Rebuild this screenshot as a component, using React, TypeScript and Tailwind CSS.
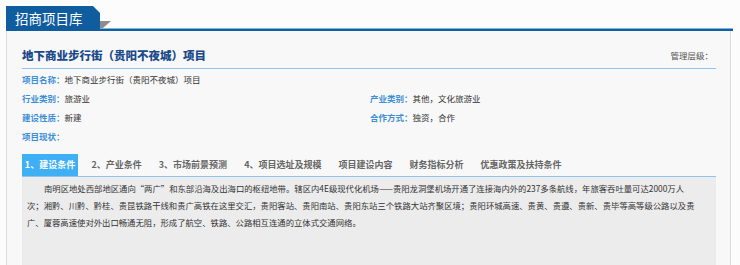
import React from 'react';

const fields: [string, string][][] = [
    [['项目名称：', '地下商业步行街（贵阳不夜城）项目']],
    [['行业类别：', '旅游业'], ['产业类别：', '其他，文化旅游业']],
    [['建设性质：', '新建'], ['合作方式：', '独资，合作']],
    [['项目现状：', '']],
];

const tabs = ['2、产业条件', '3、市场前景预测', '4、项目选址及规模', '项目建设内容', '财务指标分析', '优惠政策及扶持条件'];

export default function App() {
    return (
        <div className="w-[740px] h-[265px] overflow-hidden bg-[#fcfcfc] pl-[6px] pt-[6px] font-['Noto_Sans_CJK_SC',sans-serif]">
            {/* header tab */}
            <div className="flex w-[727px] items-end">
                <div className="h-[25px] w-[94px] bg-[#0f5c9e] pl-[9px] text-[13.5px] leading-[24px] text-white [clip-path:polygon(0_0,calc(100%-7px)_0,100%_7px,100%_100%,0_100%)]">
                    招商项目库
                </div>
                <div className="flex flex-1 flex-col">
                    <svg width="11" height="7" viewBox="0 0 11 7" className="block">
                        <polygon points="0,0 11,0 3,7 0,7" fill="#8d8d8d" />
                    </svg>
                    <div className="h-[3px] border-t border-[#7fb3dd] bg-[#13609f]" />
                </div>
            </div>

            <div className="w-[725px] h-[240px] border-x border-[#dcdcdc] bg-[#f8f8f8] pl-[15px] pr-[14px]">
                {/* title */}
                <div className="flex items-center justify-between border-b border-[#8fc4ec] pt-[16px] pb-[5px]">
                    <h1 className="text-[11.5px] leading-[16px] font-black text-[#1a4a8a]">地下商业步行街（贵阳不夜城）项目</h1>
                    <span className="pr-[3px] text-[8.5px] text-[#555]">管理层级：</span>
                </div>

                {/* fields */}
                <div className="text-[8.5px]">
                    {fields.map((row, i) => (
                        <div key={i} className={`grid grid-cols-[348px_1fr] items-center ${i === 0 ? 'h-[20px]' : 'h-[19px]'}`}>
                            {row.map(([label, value], j) => (
                                <div key={j} className="whitespace-nowrap">
                                    <span className="font-bold text-[#3d8fd6]">{label}</span>
                                    <span className="text-[#333]">{value}</span>
                                </div>
                            ))}
                        </div>
                    ))}
                </div>

                {/* tabs */}
                <div className="mt-[8px] flex h-[23px] items-stretch border-b border-[#8fc4ec] text-[9px] font-bold">
                    <div className="flex w-[56px] items-center justify-center bg-[#3fb0f3] text-white">1、建设条件</div>
                    <div className="ml-[5px] flex">
                        {tabs.map((t) => (
                            <div key={t} className="flex items-center px-[8.5px] text-[#666]">{t}</div>
                        ))}
                    </div>
                </div>

                {/* content */}
                <div className="h-[100px] bg-[#ececec] pl-[5px] pt-[3px] text-[8.35px] leading-[17px] text-[#333] whitespace-nowrap">
                    <p className="pl-[17px]">南明区地处西部地区通向“两广”和东部沿海及出海口的枢纽地带。辖区内4E级现代化机场——贵阳龙洞堡机场开通了连接海内外的237多条航线，年旅客吞吐量可达2000万人</p>
                    <p>次；湘黔、川黔、黔桂、贵昆铁路干线和贵广高铁在这里交汇，贵阳客站、贵阳南站、贵阳东站三个铁路大站齐聚区境；贵阳环城高速、贵黄、贵遵、贵新、贵毕等高等级公路以及贵</p>
                    <p>广、厦蓉高速使对外出口畅通无阻，形成了航空、铁路、公路相互连通的立体式交通网络。</p>
                </div>
            </div>
        </div>
    );
}
